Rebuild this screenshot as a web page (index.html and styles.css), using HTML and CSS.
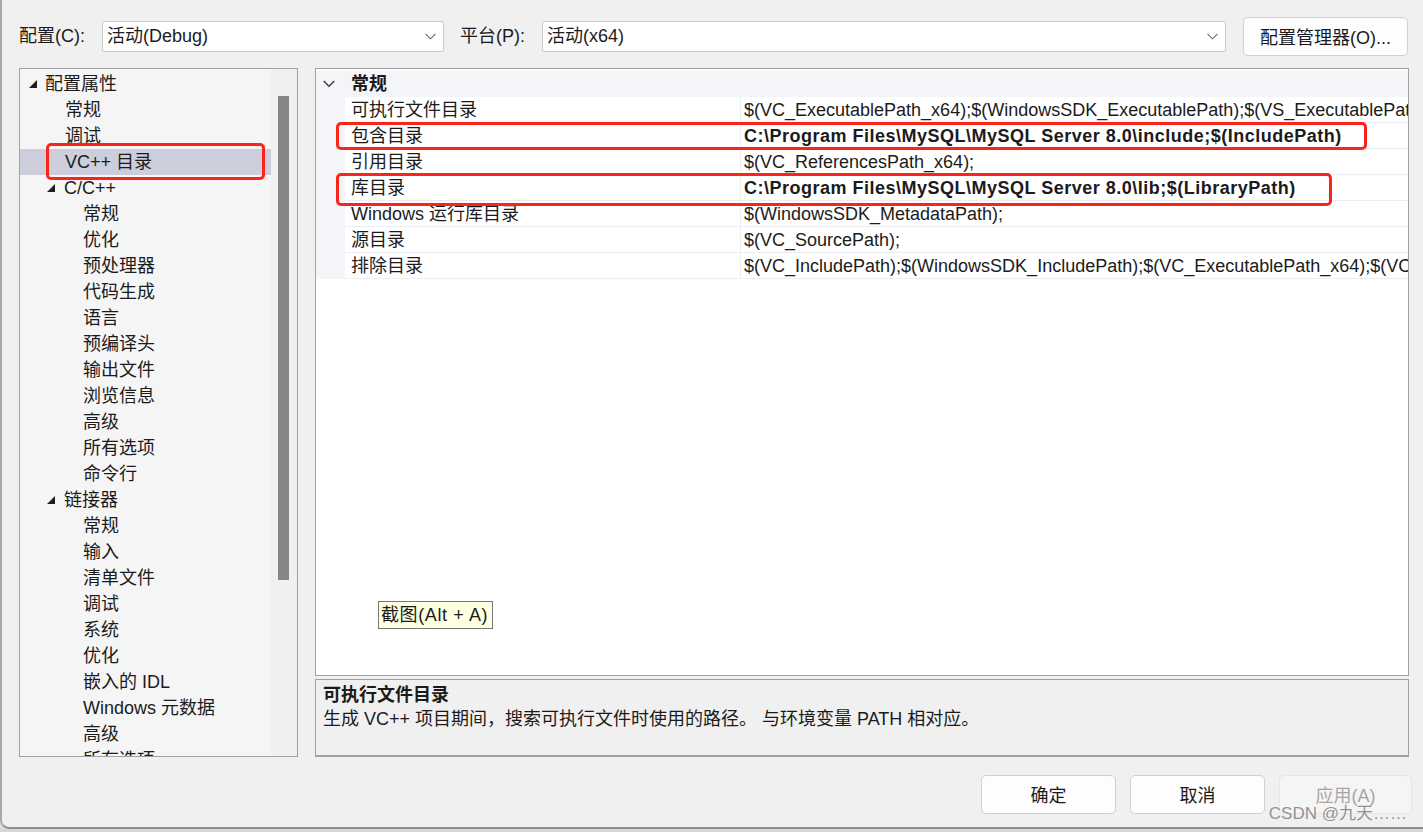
FILE: index.html
```html
<!DOCTYPE html>
<html lang="zh-CN">
<head>
<meta charset="utf-8">
<title>属性页</title>
<link rel="stylesheet" href="styles.css">
</head>
<body>
<div class="dialog">
  <div class="toprow">
    <span class="lbl lbl1">配置(C):</span>
    <div class="combo c1"><span class="ctext">活动(Debug)</span><svg class="dd" width="11" height="7" viewBox="0 0 11 7"><polyline points="0.5,0.8 5.5,5.8 10.5,0.8" fill="none" stroke="#6a6a6a" stroke-width="1.1"/></svg></div>
    <span class="lbl lbl2">平台(P):</span>
    <div class="combo c2"><span class="ctext">活动(x64)</span><svg class="dd" width="11" height="7" viewBox="0 0 11 7"><polyline points="0.5,0.8 5.5,5.8 10.5,0.8" fill="none" stroke="#6a6a6a" stroke-width="1.1"/></svg></div>
    <button class="btn mgr">配置管理器(O)...</button>
  </div>

  <div class="main">
    <div class="tree">
      <div class="tree-list">
        <div class="trow l0"><span class="tri"></span>配置属性</div>
        <div class="trow l1">常规</div>
        <div class="trow l1">调试</div>
        <div class="trow l1 sel">VC++ 目录</div>
        <div class="trow l1t"><span class="tri"></span>C/C++</div>
        <div class="trow l2">常规</div>
        <div class="trow l2">优化</div>
        <div class="trow l2">预处理器</div>
        <div class="trow l2">代码生成</div>
        <div class="trow l2">语言</div>
        <div class="trow l2">预编译头</div>
        <div class="trow l2">输出文件</div>
        <div class="trow l2">浏览信息</div>
        <div class="trow l2">高级</div>
        <div class="trow l2">所有选项</div>
        <div class="trow l2">命令行</div>
        <div class="trow l1t"><span class="tri"></span>链接器</div>
        <div class="trow l2">常规</div>
        <div class="trow l2">输入</div>
        <div class="trow l2">清单文件</div>
        <div class="trow l2">调试</div>
        <div class="trow l2">系统</div>
        <div class="trow l2">优化</div>
        <div class="trow l2">嵌入的 IDL</div>
        <div class="trow l2">Windows 元数据</div>
        <div class="trow l2">高级</div>
        <div class="trow l2">所有选项</div>
      </div>
      <div class="vscroll"><div class="thumb"></div></div>
      <div class="hl hl-tree"></div>
    </div>

    <div class="right">
      <div class="grid">
        <div class="grow ghead">
          <div class="gm"><svg class="gchev" width="12" height="8" viewBox="0 0 12 8"><polyline points="0.7,1 6,6.3 11.3,1" fill="none" stroke="#3a3a3a" stroke-width="1.3"/></svg></div>
          <div class="ghtext">常规</div>
        </div>
        <div class="grow"><div class="gm"></div><div class="gname">可执行文件目录</div><div class="gval">$(VC_ExecutablePath_x64);$(WindowsSDK_ExecutablePath);$(VS_ExecutablePath);$(MSBuild_ExecutablePath);$(FxCopDir);$(PATH);</div></div>
        <div class="grow"><div class="gm"></div><div class="gname">包含目录</div><div class="gval b">C:\Program Files\MySQL\MySQL Server 8.0\include;$(IncludePath)</div></div>
        <div class="grow"><div class="gm"></div><div class="gname">引用目录</div><div class="gval">$(VC_ReferencesPath_x64);</div></div>
        <div class="grow"><div class="gm"></div><div class="gname">库目录</div><div class="gval b">C:\Program Files\MySQL\MySQL Server 8.0\lib;$(LibraryPath)</div></div>
        <div class="grow"><div class="gm"></div><div class="gname">Windows 运行库目录</div><div class="gval">$(WindowsSDK_MetadataPath);</div></div>
        <div class="grow"><div class="gm"></div><div class="gname">源目录</div><div class="gval">$(VC_SourcePath);</div></div>
        <div class="grow"><div class="gm"></div><div class="gname">排除目录</div><div class="gval">$(VC_IncludePath);$(WindowsSDK_IncludePath);$(VC_ExecutablePath_x64);$(VC_LibraryPath_x64);</div></div>

        <div class="hl hl-inc"></div>
        <div class="hl hl-lib"></div>
        <div class="tip">截图(Alt + A)</div>
      </div>
      <div class="desc">
        <div class="dtitle">可执行文件目录</div>
        <div class="dtext">生成 VC++ 项目期间，搜索可执行文件时使用的路径。 与环境变量 PATH 相对应。</div>
      </div>
    </div>
  </div>

  <div class="bottom">
    <button class="btn act">确定</button>
    <button class="btn act">取消</button>
    <button class="btn dis">应用(A)</button>
    <span class="wm">CSDN @九天……</span>
  </div>
</div>
<div class="under"></div>
</body>
</html>
```

FILE: styles.css
```css
* { box-sizing: border-box; }

body {
  margin: 0;
  width: 1423px;
  height: 832px;
  overflow: hidden;
  background: #dedede;
  font-family: "Liberation Sans", "Noto Sans CJK SC", sans-serif;
  font-size: 18px;
  color: #1b1b1b;
}

.dialog {
  height: 829px;
  background: #f0f0f0;
  border-left: 2px solid #a9a9a9;
  border-bottom: 2px solid #8e8e8e;
  border-bottom-left-radius: 9px;
  padding: 17px 0 0 17px;
  display: flex;
  flex-direction: column;
}

.under { height: 3px; background: #d8d8d8; }

/* top row */
.toprow {
  display: flex;
  align-items: center;
  height: 39px;
}
.lbl { line-height: 24px; white-space: nowrap; padding-bottom: 2px; }
.lbl1 { width: 83px; }
.lbl2 { width: 82px; margin-left: 16px; }

.combo {
  height: 31px;
  background: #fff;
  border: 1px solid #cacaca;
  border-radius: 2px;
  display: flex;
  align-items: center;
  justify-content: space-between;
  padding: 0 7px 0 4px;
  white-space: nowrap;
}
.ctext { line-height: 24px; padding-bottom: 2px; }
.c1 { width: 342px; }
.c2 { width: 684px; }
.dd { display: block; }

.btn {
  font-family: inherit;
  font-size: 18px;
  color: #1b1b1b;
  background: #fdfdfd;
  border: 1px solid #d0d0d0;
  border-radius: 5px;
  height: 39px;
  padding: 0 0 2px 0;
}
.mgr { width: 165px; margin-left: 17px; }

/* main */
.main {
  display: flex;
  margin-top: 12px;
  height: 689px;
}

.tree {
  width: 279px;
  border: 1px solid #a0a0a0;
  background: #f5f5f5;
  display: flex;
  position: relative;
  overflow: hidden;
}
.tree-list {
  flex: 1;
  padding-top: 2px;
  overflow: hidden;
}
.trow {
  height: 26px;
  line-height: 26px;
  display: flex;
  align-items: center;
  white-space: nowrap;
}
.l0 { padding-left: 9px; }
.l0 .tri { margin-right: 8px; }
.l1 { padding-left: 45px; }
.l1t { padding-left: 27px; }
.l1t .tri { margin-right: 9px; }
.l2 { padding-left: 63px; }
.sel { background: #cccedb; }

.tri {
  width: 0;
  height: 0;
  border-left: 8px solid transparent;
  border-bottom: 8px solid #1e1e1e;
  margin-top: -1px;
}

.vscroll {
  width: 26px;
  background: #f0f0f0;
  padding: 27px 0 0 7px;
}
.thumb {
  width: 11px;
  height: 484px;
  background: #868686;
}

.hl {
  position: absolute;
  border: 3px solid #fa2419;
  border-radius: 5px;
  pointer-events: none;
}
.hl-tree { left: 26px; top: 74px; width: 219px; height: 37px; }

.right {
  margin-left: 17px;
  width: 1094px;
  display: flex;
  flex-direction: column;
}

.grid {
  height: 608px;
  border: 1px solid #a0a0a0;
  background: #fff;
  position: relative;
  padding-top: 2px;
  overflow: hidden;
}
.grow {
  display: flex;
  height: 26px;
  line-height: 26px;
  white-space: nowrap;
}
.gm {
  width: 29px;
  flex: none;
  background: #f3f5f9;
  display: flex;
  align-items: center;
  padding-left: 7px;
}
.gchev { display: block; }
.ghead { background: #f3f5f9; }
.ghtext { padding-left: 6px; font-weight: bold; }
.gname {
  width: 395px;
  flex: none;
  padding-left: 6px;
  border-bottom: 1px solid #eceef1;
}
.gval {
  flex: 1;
  padding-left: 3px;
  border-left: 1px solid #eceef1;
  border-bottom: 1px solid #eceef1;
  overflow: hidden;
}
.gval.b { font-weight: bold; letter-spacing: 0.5px; }

.hl-inc { left: 20px; top: 53px; width: 1031px; height: 28px; }
.hl-lib { left: 20px; top: 104px; width: 996px; height: 33px; }

.tip {
  position: absolute;
  left: 62px;
  top: 532px;
  width: 115px;
  height: 28px;
  line-height: 26px;
  padding: 0 0 0 2px;
  letter-spacing: 0.6px;
  background: #ffffe1;
  border: 1px solid #767676;
  white-space: nowrap;
}

.desc {
  margin-top: 3px;
  height: 78px;
  border: 1px solid #a0a0a0;
  border-bottom: 2px solid #a0a0a0;
  padding: 3px 0 0 7px;
}
.dtitle { font-weight: bold; line-height: 24px; }
.dtext { line-height: 24px; }

/* bottom */
.bottom {
  position: relative;
  display: flex;
  justify-content: flex-end;
  gap: 14px;
  margin-top: 18px;
  padding-right: 11px;
}
.act { width: 135px; }
.dis {
  width: 133px;
  color: #a6a6a6;
  background: #f5f5f5;
  border-color: #e6e6e6;
}
.wm {
  position: absolute;
  right: 16px;
  top: 27px;
  font-size: 17px;
  line-height: 24px;
  color: rgba(120, 120, 120, 0.8);
  white-space: nowrap;
}
```
